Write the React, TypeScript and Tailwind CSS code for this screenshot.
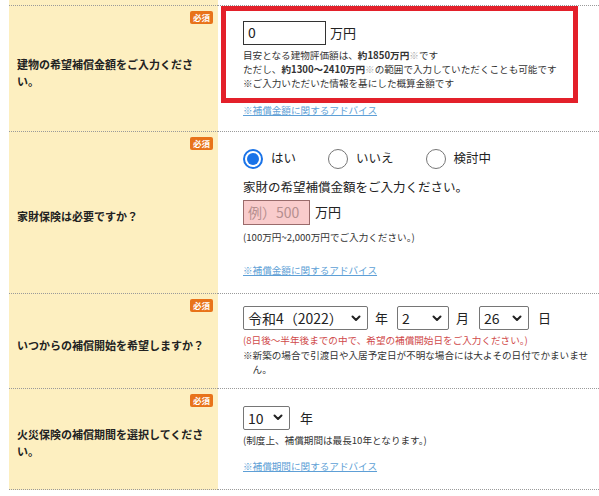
import React from 'react';

const Badge = () => (
  <span className="absolute top-[5px] right-[5px] flex h-[13px] w-[23px] items-center justify-center rounded-[2px] bg-[#e8731a] text-[8.5px] font-bold leading-none text-white">
    必須
  </span>
);

const Chevron = () => (
  <svg width="10" height="7" viewBox="0 0 10 7" className="shrink-0">
    <path d="M1.5 1.5 L5 5 L8.5 1.5" fill="none" stroke="#222" strokeWidth="2" strokeLinecap="round" strokeLinejoin="round" />
  </svg>
);

const Select = ({ value, width }: { value: string; width: string }) => (
  <div className={`flex h-[24px] items-center justify-between rounded-[2px] border border-[#767676] bg-white pl-[4px] pr-[6px] text-[14px] leading-none ${width}`}>
    <span>{value}</span>
    <Chevron />
  </div>
);

const Radio = ({ checked, label, className = '' }: { checked?: boolean; label: string; className?: string }) => (
  <div className={`flex items-center ${className}`}>
    {checked ? (
      <span className="flex h-[20px] w-[20px] items-center justify-center rounded-full border-2 border-[#1a73e8] bg-white">
        <span className="h-[12px] w-[12px] rounded-full bg-[#1a73e8]" />
      </span>
    ) : (
      <span className="h-[20px] w-[20px] rounded-full border border-[#767676] bg-white" />
    )}
    <span className="ml-[8px] text-[12.5px]">{label}</span>
  </div>
);

const AdviceLink = ({ text, className = '' }: { text: string; className?: string }) => (
  <a className={`block w-fit text-[9.6px] leading-[14px] text-[#5e9fd6] underline ${className}`}>{text}</a>
);

const Row = ({
  label,
  height,
  last,
  children,
}: {
  label: string;
  height: string;
  last?: boolean;
  children: React.ReactNode;
}) => {
  const line = `border-t border-dotted border-[#9a9a9a] ${last ? 'border-b' : ''}`;
  return (
    <div className={`flex ${height}`}>
      <div className={`relative flex w-[209px] shrink-0 items-center bg-[#fdefc0] pt-[8px] pl-[8px] pr-[11px] ${line}`}>
        <Badge />
        <p className="text-[11px] font-bold leading-[17px] text-[#222]">{label}</p>
      </div>
      <div className={`relative flex flex-1 flex-col justify-center pl-[25px] ${line}`}>{children}</div>
    </div>
  );
};

export default function App() {
  return (
    <div className="h-[496px] w-[599px] overflow-hidden bg-white font-['Noto_Sans_CJK_JP','Noto_Sans',sans-serif] text-[#222]">
      <div className="ml-[9px]">
        <div className="h-[5px] w-[209px] bg-[#fdefc0]" />

        <Row label="建物の希望補償金額をご入力ください。" height="h-[126px]">
          <div className="flex h-[24px] items-center">
            <div className="flex h-[24px] w-[83px] items-center border border-[#333] pl-[4px] text-[14px]">0</div>
            <span className="ml-[4px] text-[13px]">万円</span>
          </div>
          <div className="mt-[3px] text-[9.6px] leading-[14px] text-[#333]">
            <p>
              目安となる建物評価額は、<b>約1850万円</b>
              <span className="text-[#aaa]">※</span>です
            </p>
            <p>
              ただし、<b>約1300～2410万円</b>
              <span className="text-[#aaa]">※</span>の範囲で入力していただくことも可能です
            </p>
            <p>※ご入力いただいた情報を基にした概算金額です</p>
          </div>
          <AdviceLink text="※補償金額に関するアドバイス" className="mt-[13px]" />
          {/* annotation frame drawn over the first block */}
          <div className="pointer-events-none absolute top-0 left-[3px] h-[97px] w-[357px] border-[5px] border-[#e3202a]" />
        </Row>

        <Row label="家財保険は必要ですか？" height="h-[162px]">
          <div className="flex h-[20px] items-center">
            <Radio checked label="はい" />
            <Radio label="いいえ" className="ml-[32px]" />
            <Radio label="検討中" className="ml-[32px]" />
          </div>
          <p className="mt-[9px] text-[12.5px] leading-[18px]">家財の希望補償金額をご入力ください。</p>
          <div className="mt-[4px] flex h-[25px] items-center">
            <div className="flex h-[25px] w-[67px] items-center border border-[#9a6b6b] bg-[#f9cccc] pl-[4px] text-[14px] text-[#b58f8f]">
              例）500
            </div>
            <span className="ml-[5px] text-[13px]">万円</span>
          </div>
          <p className="mt-[5px] text-[9.6px] leading-[14px] text-[#333]">(100万円~2,000万円でご入力ください。)</p>
          <AdviceLink text="※補償金額に関するアドバイス" className="mt-[19px]" />
        </Row>

        <Row label="いつからの補償開始を希望しますか？" height="h-[95px]">
          <div className="flex h-[24px] items-center text-[13px]">
            <Select value="令和4（2022）" width="w-[125px]" />
            <span className="ml-[7px]">年</span>
            <Select value="2" width="ml-[9px] w-[52px]" />
            <span className="ml-[7px]">月</span>
            <Select value="26" width="ml-[10px] w-[50px]" />
            <span className="ml-[9px]">日</span>
          </div>
          <p className="mt-[3px] text-[9.6px] leading-[14px] text-[#d04a4a]">
            (8日後～半年後までの中で、希望の補償開始日をご入力ください。)
          </p>
          <p className="mt-[1px] pl-[9.6px] -indent-[9.6px] text-[9.6px] leading-[14px] text-[#333]">
            ※新築の場合で引渡日や入居予定日が不明な場合には大よその日付でかまいません。
          </p>
        </Row>

        <Row label="火災保険の補償期間を選択してください。" height="h-[102px]" last>
          <div className="flex h-[24px] items-center text-[13px]">
            <Select value="10" width="w-[47px]" />
            <span className="ml-[10px]">年</span>
          </div>
          <p className="mt-[3px] text-[9.6px] leading-[14px] text-[#333]">(制度上、補償期間は最長10年となります。)</p>
          <AdviceLink text="※補償期間に関するアドバイス" className="mt-[12px]" />
        </Row>
      </div>
    </div>
  );
}
